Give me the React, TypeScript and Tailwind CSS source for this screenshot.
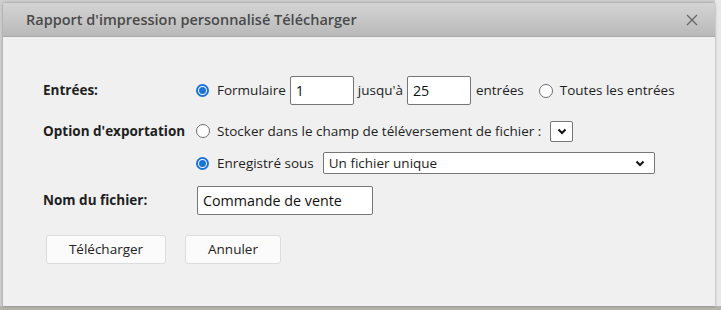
const font = { fontFamily: '"Open Sans", "Noto Sans", sans-serif' };

function Radio({ checked }: { checked?: boolean }) {
  return checked ? (
    <span className="w-[13px] h-[13px] rounded-full border-2 border-[#1a73d9] bg-white flex items-center justify-center shrink-0">
      <span className="w-[7px] h-[7px] rounded-full bg-[#1a73d9]" />
    </span>
  ) : (
    <span className="w-[14px] h-[14px] rounded-full border border-[#6f6f6f] bg-white shrink-0" />
  );
}

function Chevron() {
  return (
    <svg width="10" height="7" viewBox="0 0 10 7" className="shrink-0">
      <path d="M1.5 1.5 L5 5 L8.5 1.5" fill="none" stroke="#111" strokeWidth="2" />
    </svg>
  );
}

function TextBox({ value, w }: { value: string; w: string }) {
  return (
    <div className={`${w} h-[29px] bg-white border border-[#767676] rounded-[2px] flex items-center pl-[5px] text-[14.3px] text-[#111]`}>
      {value}
    </div>
  );
}

export default function App() {
  return (
    <div className="w-[721px] h-[310px] bg-[#cfcfcf] overflow-hidden relative" style={font}>
      <div className="absolute left-[715px] top-0 w-[6px] h-[310px] bg-[#e9e9e9]" />
      <div className="absolute left-0 top-[306px] w-[721px] h-[4px] bg-[#b7b4ad]" />
      <div className="ml-[3px] mt-[3px] w-[712px] h-[303px] bg-[#f0f0f0] rounded-t-[3px] shadow-[0_0_3px_rgba(0,0,0,0.35)] relative flex flex-col">
        {/* en-tête */}
        <div className="h-[34px] shrink-0 rounded-t-[3px] bg-gradient-to-b from-[#d4d4d4] to-[#b9b9b9] border-b border-[#a9a9a9] flex items-center justify-between pl-[23px] pr-[17px]">
          <span className="text-[14.5px] font-semibold text-[#4a4a4a]">
            Rapport d'impression personnalisé Télécharger
          </span>
          <svg width="12" height="12" viewBox="0 0 12 12">
            <path d="M1 1 L11 11 M11 1 L1 11" stroke="#666" strokeWidth="1.3" />
          </svg>
        </div>

        {/* contenu */}
        <div className="flex flex-col pl-[40px] pt-[39px] text-[13.5px] text-[#1e1e1e]">
          <div className="flex items-center h-[29px]">
            <span className="w-[153px] font-bold">Entrées:</span>
            <Radio checked />
            <span className="ml-[8px] mr-[4px]">Formulaire</span>
            <TextBox value="1" w="w-[64px]" />
            <span className="ml-[4px] mr-[4px]">jusqu'à</span>
            <TextBox value="25" w="w-[64px]" />
            <span className="ml-[5px] mr-[15px]">entrées</span>
            <Radio />
            <span className="ml-[7px]">Toutes les entrées</span>
          </div>

          <div className="flex items-center h-[22px] mt-[15px]">
            <span className="w-[153px] font-bold">Option d'exportation</span>
            <Radio />
            <span className="ml-[7px]">Stocker dans le champ de téléversement de fichier :</span>
            <div className="ml-[9px] w-[23px] h-[21px] bg-white border border-[#767676] rounded-[2px] flex items-center justify-center">
              <Chevron />
            </div>
          </div>

          <div className="flex items-center h-[22px] mt-[10px]">
            <span className="w-[153px]" />
            <Radio checked />
            <span className="ml-[8px]">Enregistré sous</span>
            <div className="ml-[9px] w-[332px] h-[22px] bg-white border border-[#767676] rounded-[2px] flex items-center justify-between pl-[5px] pr-[9px]">
              <span>Un fichier unique</span>
              <Chevron />
            </div>
          </div>

          <div className="flex items-center h-[29px] mt-[12px]">
            <span className="w-[154px] font-bold">Nom du fichier:</span>
            <TextBox value="Commande de vente" w="w-[176px]" />
          </div>

          <div className="flex items-center gap-[19px] mt-[20px] ml-[3px]">
            <button className="w-[120px] h-[29px] bg-[#fbfbfb] border border-[#dcdcdc] rounded-[3px] text-[13.5px] text-[#222]">
              Télécharger
            </button>
            <button className="w-[96px] h-[29px] bg-[#fbfbfb] border border-[#dcdcdc] rounded-[3px] text-[13.5px] text-[#222]">
              Annuler
            </button>
          </div>
        </div>
      </div>
    </div>
  );
}
